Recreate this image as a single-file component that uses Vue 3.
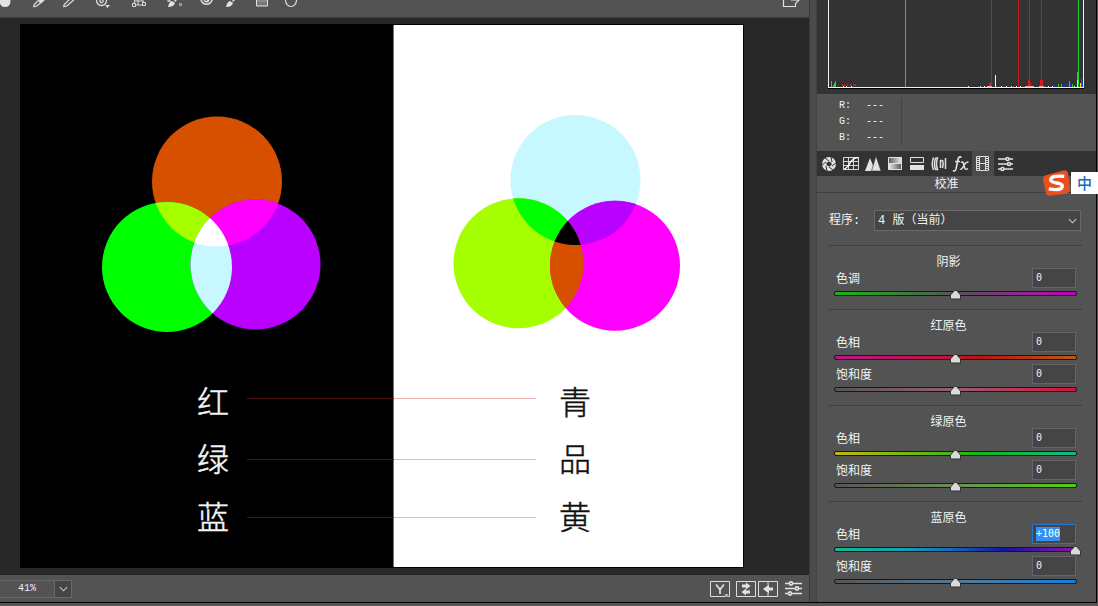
<script setup>
import { ref, onMounted } from 'vue'

const sections = ref([
  { title: '阴影', rows: [{ id: 'shadow-tint', label: '色调', value: '0', pos: 0, tone: 'tint' }] },
  {
    title: '红原色',
    rows: [
      { id: 'red-hue', label: '色相', value: '0', pos: 0, tone: 'red-hue' },
      { id: 'red-sat', label: '饱和度', value: '0', pos: 0, tone: 'red-sat' }
    ]
  },
  {
    title: '绿原色',
    rows: [
      { id: 'green-hue', label: '色相', value: '0', pos: 0, tone: 'green-hue' },
      { id: 'green-sat', label: '饱和度', value: '0', pos: 0, tone: 'green-sat' }
    ]
  },
  {
    title: '蓝原色',
    rows: [
      { id: 'blue-hue', label: '色相', value: '+100', pos: 100, tone: 'blue-hue' },
      { id: 'blue-sat', label: '饱和度', value: '0', pos: 0, tone: 'blue-sat' }
    ]
  }
])

const zoom = ref('41%')
const process = ref('4')

function slide(row) {
  row.value = row.pos > 0 ? '+' + row.pos : String(row.pos)
}

onMounted(() => {
  const field = document.getElementById('blue-hue')
  field.focus()
  field.select()
})
</script>

<template>
  <div class="window">
    <main class="workspace">
      <section class="editor">
        <div class="toolbar">
          <button class="tool" aria-label="污点去除"><svg viewBox="0 0 18 9"><circle cx="5" cy="1.500" r="5.500" fill="#e2e2e2" /></svg></button>
          <button class="tool" aria-label="颜色取样"><svg viewBox="0 0 18 9"><path d="M.7 6.500 1.200 4.500 9-3h5L4.500 5.500 2.500 6.300z" fill="#555" stroke="#ddd" stroke-width="1.200" /><path d="M7-1h6L8 3.500 5.500 1.500z" fill="#ddd" /></svg></button>
          <button class="tool" aria-label="白平衡"><svg viewBox="0 0 18 9"><path d="M.7 6.500 1.200 4.500 9-3h5L4.500 5.500 2.500 6.300z" fill="#555" stroke="#ddd" stroke-width="1.200" /></svg></button>
          <button class="tool" aria-label="目标调整"><svg viewBox="0 0 18 9"><circle cx="6.500" cy=".5" r="5" fill="none" stroke="#ddd" stroke-width="1.300" /><circle cx="6.500" cy="1" r="1.600" fill="none" stroke="#ddd" stroke-width="1.200" /><path d="M10 5h5l-2.500 3z" fill="#ddd" /></svg></button>
          <button class="tool" aria-label="变换"><svg viewBox="0 0 18 9"><path d="M3 5h10M3 5 4-2M13 4 11-2M7 5V-2M4 1h8" fill="none" stroke="#ddd" /><path d="M1.500 3.500h3v3h-3zM11.500 2.500h3v3h-3z" fill="#555" stroke="#ddd" /></svg></button>
          <button class="tool" aria-label="污点修复"><svg viewBox="0 0 18 9"><path d="M3 7q1-5 4-6l3 2q-1 4-7 4zM9 1l3-3h2l-4 4z" fill="#e2e2e2" /><path d="M2 1h4M4-1v3" stroke="#ddd" /><path d="M14 3h3v3h-3z" fill="#999" /></svg></button>
          <button class="tool" aria-label="红眼"><svg viewBox="0 0 18 9"><path d="M.7-1Q2 4.200 6.500 4.200T12.500-1" fill="none" stroke="#ddd" stroke-width="1.500" /><circle cx="6.500" cy="-.5" r="3" fill="#ddd" /><circle cx="6" cy="0" r="1" fill="#555" /></svg></button>
          <button class="tool" aria-label="调整画笔"><svg viewBox="0 0 18 9"><path d="M1 7q1-5 4-6l3 2q-1 4-7 4zM7 1l3-3h2L8 2z" fill="#e2e2e2" /></svg></button>
          <button class="tool" aria-label="渐变滤镜"><svg viewBox="0 0 18 9"><path d="M1.500-3v9h11v-9" fill="#777" stroke="#e2e2e2" /><path d="M2 0h10v2H2z" fill="#8c8c8c" /></svg></button>
          <button class="tool" aria-label="径向滤镜"><svg viewBox="0 0 18 9"><ellipse cx="7" cy="0" rx="5.500" ry="6.500" fill="none" stroke="#ddd" stroke-width="1.200" /></svg></button>
          <button class="tool export" aria-label="切换全屏"><svg viewBox="0 0 18 9"><path d="M1.500-2v8.500h12V3M9 0h8M14-3l3 3-3 3" fill="none" stroke="#e2e2e2" stroke-width="1.200" /></svg></button>
        </div>

        <div class="canvas">
          <svg class="artwork" viewBox="20 24 724 544" role="img" aria-label="三原色">
            <defs>
              <clipPath id="l-top"><circle cx="217" cy="181.500" r="65" /></clipPath>
              <clipPath id="l-left"><circle cx="167" cy="267" r="65" /></clipPath>
              <clipPath id="r-top"><circle cx="575.500" cy="180" r="65" /></clipPath>
              <clipPath id="r-left"><circle cx="518.500" cy="263.300" r="65" /></clipPath>
            </defs>
            <path d="M20 24h724v544H20z" fill="#000" />
            <path d="M394 25h349v542H394z" fill="#fff" />
            <path d="M393.500 25v542" stroke="#777" />

            <circle cx="217" cy="181.500" r="65" fill="#d65000" />
            <circle cx="167" cy="267" r="65" fill="#00ff00" />
            <circle cx="255.500" cy="264.500" r="65" fill="#ba00ff" />
            <circle cx="167" cy="267" r="65" fill="#a6ff00" clip-path="url(#l-top)" />
            <circle cx="255.500" cy="264.500" r="65" fill="#ff00ff" clip-path="url(#l-top)" />
            <g clip-path="url(#l-left)">
              <circle cx="255.500" cy="264.500" r="65" fill="#c8f8ff" />
              <circle cx="255.500" cy="264.500" r="65" fill="#fff" clip-path="url(#l-top)" />
            </g>

            <circle cx="575.500" cy="180" r="65" fill="#c8f8ff" />
            <circle cx="518.500" cy="263.300" r="65" fill="#a6ff00" />
            <circle cx="615" cy="265.700" r="65" fill="#ff00ff" />
            <circle cx="518.500" cy="263.300" r="65" fill="#00ff00" clip-path="url(#r-top)" />
            <circle cx="615" cy="265.700" r="65" fill="#ba00ff" clip-path="url(#r-top)" />
            <g clip-path="url(#r-left)">
              <circle cx="615" cy="265.700" r="65" fill="#d65000" />
              <circle cx="615" cy="265.700" r="65" fill="#000" clip-path="url(#r-top)" />
            </g>

            <path d="M247 398.500h147M247 459.500h147M247 517.500h147" stroke="#4a1512" />
            <path d="M394 398.500h142M394 459.500h142M394 517.500h142" stroke="#f0b4b4" />
            <g class="names light">
              <text x="213" y="414">红</text>
              <text x="213" y="471">绿</text>
              <text x="213" y="529">蓝</text>
            </g>
            <g class="names dark">
              <text x="575" y="414">青</text>
              <text x="575" y="471">品</text>
              <text x="575" y="529">黄</text>
            </g>
          </svg>
        </div>

        <div class="statusbar">
          <div class="zoom">
            <input v-model="zoom" class="zoom-value" type="text" aria-label="缩放级别" />
            <button class="zoom-menu" aria-label="选择缩放级别"><svg viewBox="0 0 10 6"><path d="M1 1l4 4 4-4" fill="none" stroke="#ccc" stroke-width="1.200" /></svg></button>
          </div>
          <div class="views">
            <button aria-label="原图/效果图"><svg viewBox="0 0 20 18"><path d="M.5 1.500h19v15H.5z" fill="none" stroke="#ddd" /><path d="M6 4.500 10 9.500 14 4.500M10 9.500V14" fill="none" stroke="#ddd" stroke-width="1.800" /><path d="M14 14h5l-2.500 3z" fill="#ddd" stroke="#535353" stroke-width=".6" /></svg></button>
            <button aria-label="交换设置"><svg viewBox="0 0 20 18"><path d="M.5 1.500h19v15H.5z" fill="none" stroke="#ddd" /><path d="M6 4.500h4V2.500L14.500 6 10 9.500V7.500H6zM14 10.500h-4V8.500L5.500 12l4.500 3.500V13.500h4z" fill="#e2e2e2" /></svg></button>
            <button aria-label="复制设置"><svg viewBox="0 0 20 18"><path d="M.5 1.500h19v15H.5z" fill="none" stroke="#ddd" /><path d="M10 2v3M10 13v3" stroke="#ddd" /><path d="M15 7.500h-4V4.500L5 9l6 4.500v-3h4z" fill="#e2e2e2" /></svg></button>
            <button aria-label="预览首选项"><svg viewBox="0 0 20 18"><g fill="#535353" stroke="#e2e2e2" stroke-width="1.600"><path d="M1 3.500h17M1 8.500h17M1 13.500h17" /><circle cx="7" cy="3.500" r="1.600" /><circle cx="13" cy="8.500" r="1.600" /><circle cx="6" cy="13.500" r="1.600" /></g></svg></button>
          </div>
        </div>
      </section>

      <aside class="panel">
        <div class="histogram">
          <svg viewBox="828 0 256 90" role="img" aria-label="直方图">
            <path d="M905 0h1v87h-1zM1078 0h1v87h-1z" fill="#20d52c" />
            <path d="M991 0h1v87h-1zM1018 0h1v87h-1zM1029 0h1v87h-1zM1041 0h1v87h-1z" fill="#c51820" />
            <g fill="none" shape-rendering="crispEdges">
              <path d="M828.500 0v87M1083.500 0v87" stroke="#f0f0f0" />
              <path d="M831.500 81v6M833.500 85v2M834.500 83v4M835.500 81v6M1058.500 84v3M1061.500 84v3M1069.500 81v6M1072.500 84v3M1077.500 72v15" stroke="#20d52c" />
              <path d="M842.500 84v2M844.500 84v2M847.500 84v2M850.500 84v2M853.500 84v2M855.500 84v2M989.500 83v4M990.500 83v4M1028.500 80v7M1030.500 82v5M1040.500 80v7M1042.500 80v7M1081.500 78v9" stroke="#e01c20" />
              <path d="M1054.500 85v2M1064.500 84v3M1067.500 83v4M1070.500 83v4M1082.500 82v5" stroke="#2430e8" />
              <path d="M1077.500 80v7M1080.500 83v4" stroke="#f3e73a" />
              <path d="M995.500 75v12M843.500 86v1M846.500 86v1M851.500 86v1M968.500 86v1M980.500 86v1M984.500 86v1M1001.500 86v1M1006.500 86v1M1011.500 86v1M1016.500 86v1M1020.500 86v1M1048.500 86v1M1052.500 86v1M1074.500 86v1" stroke="#f0f0f0" />
              <path d="M987 86.500h5M1025 86.500h9M1039 86.500h5" stroke="#e8a0a0" />
              <path d="M828 87.500h256" stroke="#f0f0f0" />
              <path d="M828 88.500h256" stroke="#000" />
            </g>
          </svg>
        </div>
        <dl class="readout">
          <div><dt>R:</dt><dd>---</dd></div>
          <div><dt>G:</dt><dd>---</dd></div>
          <div><dt>B:</dt><dd>---</dd></div>
        </dl>

        <nav class="tabs">
          <button aria-label="基本"><svg viewBox="0 0 18 18"><circle cx="9" cy="9" r="7" fill="#e2e2e2" /><path d="M9 6 5 3M12 7l-1-5M12 11l4-3M9 12l4 3M6 11l1 5M6 7l-4 3" stroke="#333" stroke-width="1" /><path d="M9 6.500 11.500 7.700v2.600L9 11.500l-2.500-1.200V7.700z" fill="#333" /></svg></button>
          <button aria-label="色调曲线"><svg viewBox="0 0 18 18"><path d="M1.500 2.500h15v12h-15zM6.500 2v13M11.500 2v13M1 6.500h16M1 10.500h16" fill="none" stroke="#d8d8d8" /><path d="M1.500 14.500C8 13 7 3 16.500 2.500" fill="none" stroke="#fff" stroke-width="1.300" /></svg></button>
          <button aria-label="细节"><svg viewBox="0 0 18 18"><path d="M1 16 6 3l4 10-1 3z" fill="#e2e2e2" /><path d="M7.500 16 12 1l5 15z" fill="#e2e2e2" stroke="#333" stroke-width=".6" /></svg></button>
          <button aria-label="HSL 调整"><svg viewBox="0 0 18 18"><defs><linearGradient id="hsl-a"><stop stop-color="#555" /><stop offset="1" stop-color="#eee" /></linearGradient><linearGradient id="hsl-b"><stop stop-color="#eee" /><stop offset="1" stop-color="#555" /></linearGradient></defs><path d="M2.500 2.500h13v6h-13z" fill="url(#hsl-a)" stroke="#e2e2e2" /><path d="M2.500 8.500h13v6h-13z" fill="url(#hsl-b)" stroke="#e2e2e2" /></svg></button>
          <button aria-label="分离色调"><svg viewBox="0 0 18 18"><path d="M2.500 2.500h13v5h-13z" fill="#333" stroke="#e2e2e2" /><path d="M2 10h14v5H2z" fill="#e2e2e2" /></svg></button>
          <button aria-label="镜头校正"><svg viewBox="0 0 18 18"><path d="M3.500 2.500Q1 8.500 3.500 15M5.500 3h2q-2 5.500 0 11.500h-2q-2-6 0-11.500M10.500 5v8M12.500 5q1.500 4 0 8M15.500 3v11M10 5.500h2" fill="none" stroke="#ddd" stroke-width="1.500" /></svg></button>
          <button aria-label="效果"><svg viewBox="0 0 18 18"><path d="M9.500 2.500Q7 .5 6 4.500L4 14q-1 3-3 1.500M3 6.500h5" fill="none" stroke="#e2e2e2" stroke-width="1.600" /><path d="M9 7.500q2-1.500 2.500 1l1 4q.5 3 3.500 1M16.500 7q-2-.5-4 2.500L11 12q-1.500 3-3 2" fill="none" stroke="#e2e2e2" stroke-width="1.500" /></svg></button>
          <button class="active" aria-label="校准" aria-current="page"><svg viewBox="0 0 18 18"><path d="M2.500 1.500h12v14h-12z" fill="none" stroke="#ddd" /><path d="M5.500 2v13M11.500 2v13M5.500 8.500h6" fill="none" stroke="#ddd" /><path d="M4 3v12M13 3v12" stroke="#ddd" stroke-width="2" stroke-dasharray="1 1" /></svg></button>
          <button aria-label="预设"><svg viewBox="0 0 18 18"><g fill="#333" stroke="#e2e2e2" stroke-width="1.500"><path d="M2 4h15M2 9h15M2 14h15" /><circle cx="11.500" cy="4" r="1.500" /><circle cx="13" cy="9" r="1.500" /><circle cx="6.500" cy="14" r="1.500" /></g></svg></button>
        </nav>
        <h2 class="panel-title">校准</h2>

        <div class="process">
          <label for="process">程序:</label>
          <div class="select-box">
            <select id="process" v-model="process"><option value="4">4 版（当前）</option></select>
            <svg viewBox="0 0 10 6"><path d="M1 1l4 4 4-4" fill="none" stroke="#ccc" stroke-width="1.200" /></svg>
          </div>
        </div>

        <section v-for="section in sections" :key="section.title" class="group">
          <h3>{{ section.title }}</h3>
          <div v-for="row in section.rows" :key="row.id" class="row">
            <div class="row-head">
              <label :for="row.id">{{ row.label }}</label>
              <input :id="row.id" v-model="row.value" type="text" />
            </div>
            <div class="slider">
              <div class="track" :class="row.tone"></div>
              <input v-model.number="row.pos" type="range" min="-100" max="100" :aria-label="section.title + row.label" @input="slide(row)" />
            </div>
          </div>
        </section>
      </aside>
    </main>

    <div class="ime">
      <span>中</span>
      <svg viewBox="0 0 30 28" aria-hidden="true">
        <path d="M4 6 22 1q4-1 5 3l2 16q0 4-4 5L9 27q-4 1-5-3L1 10q0-3 3-4z" fill="#e9501f" />
        <path d="M23 7Q9 6 9 11c0 4 12 2 12 6 0 5-8 4-14 3" fill="none" stroke="#fff" stroke-width="3.500" />
      </svg>
    </div>
  </div>
</template>

<style>
body {
  margin: 0;
  background: #5a5456;
}
</style>

<style scoped>
* {
  box-sizing: border-box;
}

.window {
  position: relative;
  display: flex;
  flex-direction: column;
  min-height: 100vh;
  padding: 0 1px 3px 0;
  background: #5a5456;
  color: #f2f2f2;
  font: 12px/16px "Liberation Mono", "Noto Sans CJK SC", monospace;
}

button,
input,
select {
  margin: 0;
  padding: 0;
  border: 0;
  border-radius: 0;
  background: none;
  color: inherit;
  font: inherit;
  outline: none;
}

svg {
  display: block;
}

.workspace {
  flex: 1;
  display: flex;
  gap: 6px;
  background: #4b4b4b;
  border-bottom: 1px solid #000;
}

.editor {
  flex: 1;
  min-width: 0;
  display: flex;
  flex-direction: column;
  background: #535353;
  border-right: 1px solid #3c3c3c;
}

.toolbar {
  display: grid;
  grid-template-columns: 33px 30px 32px 36px 34px 35px 25px 30px 29px 18px 1fr;
  height: 18px;
  border-bottom: 1px solid #3c3c3c;
}

.tool svg {
  width: 18px;
  height: 9px;
}

.tool {
  display: flex;
  align-items: flex-start;
}

.export {
  justify-content: flex-end;
  padding-right: 9px;
}

.canvas {
  flex: 1;
  padding: 6px 65px 6px 20px;
  background: #282828;
}

.artwork {
  width: 100%;
}

.names {
  font: 300 32px "Noto Sans CJK SC", sans-serif;
  text-anchor: middle;
  stroke-width: 0.5px;
}

.light {
  fill: #f4f4f4;
  stroke: #f4f4f4;
}

.dark {
  fill: #111;
  stroke: #111;
}

.statusbar {
  display: flex;
  justify-content: space-between;
  align-items: center;
  height: 27px;
  padding-right: 5px;
}

.zoom {
  display: flex;
  height: 18px;
  border: 1px solid #686868;
  border-left: 0;
}

.zoom-value {
  width: 54px;
  text-align: center;
  font-size: 10px;
}

.zoom-menu {
  display: grid;
  place-items: center;
  width: 17px;
  background: #454545;
  border-left: 1px solid #686868;
}

.zoom-menu svg,
.select-box svg {
  width: 9px;
  height: 6px;
}

.views {
  display: flex;
  gap: 2px;
}

.views svg {
  width: 20px;
  height: 18px;
}

.views button:first-child,
.views button:nth-child(3) {
  margin-right: 4px;
}

.panel {
  width: 281px;
  background: #535353;
  border-left: 1px solid #424242;
  border-right: 1px solid #000;
}

.histogram {
  height: 94px;
  padding: 0 12px 0 11px;
  background: #333;
}

.histogram svg {
  width: 100%;
}

.readout {
  width: 85px;
  margin: 4px 0 5px;
  border-right: 1px solid #424242;
  font-size: 10px;
}

.readout div {
  display: flex;
  gap: 15px;
  padding-left: 22px;
}

.readout dt,
.readout dd {
  margin: 0;
}

.tabs {
  display: flex;
  height: 25px;
  padding-left: 1px;
  background: #333;
}

.tabs button {
  display: grid;
  place-items: center;
  width: 22px;
}

.tabs svg {
  width: 18px;
  height: 18px;
}

.tabs .active {
  background: #4b4b4b;
}

.panel-title {
  margin: 0;
  padding: 2px 20px 0 0;
  border-bottom: 1px solid #3f3f3f;
  font: inherit;
  line-height: 14px;
  text-align: center;
}

.process {
  display: flex;
  align-items: center;
  gap: 14px;
  padding: 17px 15px 14px 12px;
}

.process label {
  width: 31px;
  white-space: nowrap;
}

.select-box {
  flex: 1;
  display: grid;
  align-items: center;
}

.select-box select,
.select-box svg {
  grid-area: 1 / 1;
}

.select-box select {
  height: 21px;
  padding: 1px 0 0 3px;
  appearance: none;
  background: #454545;
  border: 1px solid #696969;
}

.select-box svg {
  justify-self: end;
  margin-right: 4px;
  pointer-events: none;
}

.group {
  margin: 0 14px 0 12px;
  padding: 8px 0 9px;
  border-top: 1px solid #3f3f3f;
}

.group h3 {
  height: 14px;
  margin: 0;
  padding-right: 14px;
  font: inherit;
  line-height: 18px;
  text-align: center;
}

.row-head {
  display: flex;
  justify-content: space-between;
  height: 20px;
  padding: 0 6px 0 7px;
  line-height: 24px;
}

.row-head input {
  width: 44px;
  padding: 0 3px;
  background: #454545;
  border: 1px solid #656565;
  font: 10px/14px "DejaVu Sans Mono", monospace;
}

.row-head input:focus {
  border-color: #2478cc;
}

.row-head input::selection {
  background: #3390f5;
  color: #fff;
}

.slider {
  display: grid;
  height: 12px;
}

.track,
.slider input {
  grid-area: 1 / 1;
}

.track {
  height: 5px;
  margin: 3px 5px 0;
  border: 1px solid #171717;
  border-radius: 2px;
}

.slider input {
  width: 100%;
  height: 12px;
  appearance: none;
}

.slider input::-webkit-slider-thumb {
  appearance: none;
  width: 13px;
  height: 11px;
  border: 0;
  background: url("data:image/svg+xml,%3Csvg xmlns='http://www.w3.org/2000/svg' viewBox='0 0 13 11'%3E%3Cpath d='M1.500 10V6L5.500 1.500h2L11.500 6v4z' fill='%23dadada' stroke='%23333'/%3E%3C/svg%3E");
}

.tint { background: linear-gradient(90deg, #14b814, #555 50%, #c000c0); }
.red-hue { background: linear-gradient(90deg, #b8148c, #c01440 45%, #b81414 60%, #b85c14); }
.red-sat { background: linear-gradient(90deg, #555, #956070 50%, #d8103c); }
.green-hue { background: linear-gradient(90deg, #c0b814, #5cb814 40%, #14b814 60%, #14b890); }
.green-sat { background: linear-gradient(90deg, #555, #6c9058 50%, #50d010); }
.blue-hue { background: linear-gradient(90deg, #14b890, #14a0b8 30%, #1464b8 50%, #1414a0 70%, #8c14a8); }
.blue-sat { background: linear-gradient(90deg, #555, #587890 50%, #1080e0); }

.ime {
  position: absolute;
  top: 169px;
  right: 0;
  display: flex;
  flex-direction: row-reverse;
  align-items: center;
}

.ime span {
  width: 27px;
  padding-left: 6px;
  background: #fff;
  color: #1769b5;
  font: 500 15px/22px "Noto Sans CJK SC", sans-serif;
}

.ime svg {
  width: 29px;
  height: 28px;
}
</style>
